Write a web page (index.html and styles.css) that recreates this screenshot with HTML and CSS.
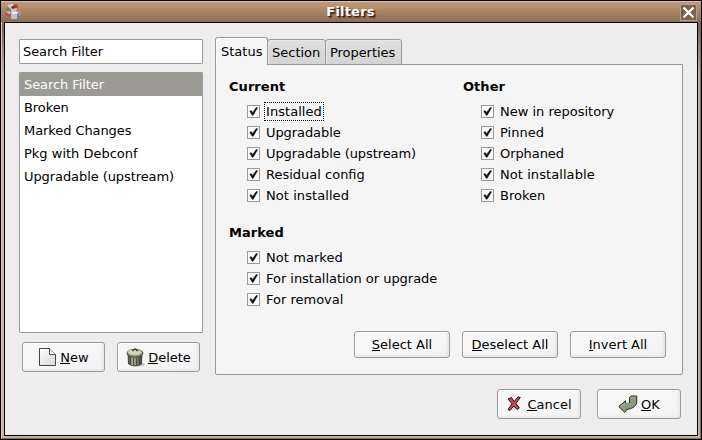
FILE: index.html
```html
<!DOCTYPE html>
<html lang="en">
<head>
<meta charset="utf-8">
<title>Filters</title>
<link rel="stylesheet" href="styles.css">
</head>
<body>
<svg class="defs" width="0" height="0">
  <symbol id="check" viewBox="0 0 11 11">
    <path d="M1.8 5.2 L3.2 4.6 L4.6 6.4 L8.2 1.6 L9.6 1.8 L5.2 9.2 L4.2 9.2Z" fill="#111" stroke="#111" stroke-width=".5"/>
  </symbol>
</svg>
<div class="window">
  <header class="titlebar">
    <svg class="app-icon" width="18" height="18" viewBox="0 0 18 18">
      <path d="M2 6 L8 4 L13 8 L8 11 L2 9Z" fill="#aaa9a2"/>
      <path d="M3 2 L8 1 L12 3 L7 6Z" fill="#d6d2ca"/>
      <path d="M7 4 L12 1 L14 5 L9 7Z" fill="#5a302b"/>
      <path d="M10 2 L13 1 L14 5 L12 6Z" fill="#c34236"/>
      <path d="M2 4 L7 6 L7 11 L2 8Z" fill="#777c7b"/>
      <path d="M7 6 L13 5 L12 10 L7 11Z" fill="#c5c8c7"/>
      <path d="M1 9 L5 8 L8 10 L8 15 L1 12Z" fill="#bb514d"/>
      <path d="M2 9 L5 8 L8 10 L5 11Z" fill="#e6b4ae"/>
      <path d="M12 8 L17 8 L17 12 L13 14Z" fill="#d97f85"/>
      <path d="M7 11 L9 9 H15 L12 12Z" fill="#e9f0f5"/>
      <path d="M7 11 H13 V16 L7 16Z" fill="#a8c3da"/>
      <path d="M13 11 L15 9 V14 L13 16Z" fill="#6488a7"/>
    </svg>
    <h1 class="title">Filters</h1>
    <button class="close" aria-label="Close">
      <svg width="15" height="15" viewBox="0 0 15 15"><path d="M2.5 2.5 L12.5 12.5 M12.5 2.5 L2.5 12.5" stroke="#fff" stroke-width="2.3"/></svg>
    </button>
  </header>
  <main class="content">
    <div class="columns">
      <aside class="sidebar">
        <div class="entry">Search Filter</div>
        <ul class="list">
          <li class="selected">Search Filter</li>
          <li>Broken</li>
          <li>Marked Changes</li>
          <li class="plain">Pkg with Debconf</li>
          <li>Upgradable (upstream)</li>
        </ul>
        <div class="side-buttons">
          <button class="btn tall">
            <svg width="18" height="20" viewBox="0 0 18 20">
              <defs><linearGradient id="paper" x1="0" y1="0" x2="1" y2="1"><stop offset="0" stop-color="#fff"/><stop offset="1" stop-color="#d8d8d6"/></linearGradient></defs>
              <path d="M1.5 1.5 H11.5 L17.5 7.5 V18.5 H1.5Z" fill="url(#paper)" stroke="#444" stroke-linejoin="round"/>
              <path d="M11.5 1.5 V7.5 H17.5" fill="#fff" stroke="#555"/>
            </svg>
            <span><u>N</u>ew</span>
          </button>
          <button class="btn tall delete">
            <svg width="19" height="20" viewBox="0 0 19 20">
              <defs><linearGradient id="can"><stop offset="0" stop-color="#45463a"/><stop offset=".35" stop-color="#b5b6a0"/><stop offset="1" stop-color="#3c3d32"/></linearGradient></defs>
              <ellipse cx="13" cy="17.5" rx="6" ry="2" fill="#c8c8c4"/>
              <path d="M2 7 L2.5 17 Q8.5 21 15.5 17 L16 7Z" fill="url(#can)" stroke="#35362b" stroke-width=".8"/>
              <path d="M4.5 10 V17.5 M7.5 11 V18.5 M10.5 11 V18.5 M13.5 10 V17.5" stroke="#4b4d40"/>
              <ellipse cx="9" cy="6.3" rx="8" ry="4" fill="#85876f" stroke="#383a2f" stroke-width=".8"/>
              <ellipse cx="8.7" cy="5.3" rx="6.8" ry="2.9" fill="#d3d4c0"/>
              <path d="M6.5 4.2 Q9 -.2 11.5 4.2" fill="none" stroke="#34362c" stroke-width="1.3"/>
            </svg>
            <span><u>D</u>elete</span>
          </button>
        </div>
      </aside>
      <section class="notebook">
        <nav class="tabs">
          <div class="tab active">Status</div>
          <div class="tab section-tab">Section</div>
          <div class="tab properties-tab">Properties</div>
        </nav>
        <div class="panel">
          <div class="groups">
            <div class="group">
              <h2>Current</h2>
              <div class="option"><svg class="box"><use href="#check"/></svg><span class="focused">Installed</span></div>
              <div class="option"><svg class="box"><use href="#check"/></svg><span class="snug">Upgradable</span></div>
              <div class="option"><svg class="box"><use href="#check"/></svg><span class="snug">Upgradable (upstream)</span></div>
              <div class="option"><svg class="box"><use href="#check"/></svg>Residual config</div>
              <div class="option"><svg class="box"><use href="#check"/></svg><span class="loose">Not installed</span></div>
            </div>
            <div class="group">
              <h2>Other</h2>
              <div class="option"><svg class="box"><use href="#check"/></svg>New in repository</div>
              <div class="option"><svg class="box"><use href="#check"/></svg>Pinned</div>
              <div class="option"><svg class="box"><use href="#check"/></svg><span class="snug">Orphaned</span></div>
              <div class="option"><svg class="box"><use href="#check"/></svg><span class="loose">Not installable</span></div>
              <div class="option"><svg class="box"><use href="#check"/></svg>Broken</div>
            </div>
            <div class="group">
              <h2>Marked</h2>
              <div class="option"><svg class="box"><use href="#check"/></svg><span class="loose">Not marked</span></div>
              <div class="option"><svg class="box"><use href="#check"/></svg><span class="long">For installation or upgrade</span></div>
              <div class="option"><svg class="box"><use href="#check"/></svg>For removal</div>
            </div>
          </div>
          <div class="panel-buttons">
            <button class="btn"><span><u>S</u>elect All</span></button>
            <button class="btn"><span><u>D</u>eselect All</span></button>
            <button class="btn"><span><u>I</u>nvert All</span></button>
          </div>
        </div>
      </section>
    </div>
    <footer class="actions">
      <button class="btn tall cancel">
        <svg width="14" height="16" viewBox="0 0 14 16">
          <path d="M1 3 L4.5 1.5 L7 5.5 L11 1 L13.3 1.3 L9 7.5 L12.3 12 L10 13.5 L6.7 10 L3 14.5 L1 13.5 L5 7.8Z" fill="#c34a55" stroke="#251014" stroke-linejoin="round"/>
        </svg>
        <span><u>C</u>ancel</span>
      </button>
      <button class="btn tall ok">
        <svg width="20" height="19" viewBox="0 0 20 19">
          <path d="M11.5 2.5 L13 1 H18.7 V8 Q17 13.5 8.5 14.5 V15.5 L6.8 17.4 L.8 11.6 L7.5 5.8 V8.3 H11.5Z" fill="#899a80" stroke="#252c22" stroke-linejoin="round"/>
          <path d="M13 2.4 H17.5 M12.4 8.8 H7 L2.7 11.6" fill="none" stroke="#a9b69f"/>
        </svg>
        <span><u>O</u>K</span>
      </button>
    </footer>
  </main>
</div>
</body>
</html>
```

FILE: styles.css
```css
* { box-sizing: border-box; }
body {
  margin: 0;
  font: 13px/15px "DejaVu Sans", sans-serif;
  color: #000;
  background: #000;
}
.defs { display: none; }
svg { display: block; flex: none; }
button { font: inherit; color: inherit; padding: 0; }
.window {
  width: 702px;
  height: 440px;
  border: 1px solid #000;
  padding: 0 3px 3px;
  background: linear-gradient(#c5a17d, #806247 25px, #cdb095 75px, #cdb095);
  box-shadow: inset 1px 1px #e0c5b0, inset -1px -1px #836a54;
}
.titlebar {
  height: 21px;
  margin: 0 -3px;
  display: flex;
  align-items: center;
  padding: 0 4px 0 3px;
  border-top: 1px solid #e2c0a0;
  background: linear-gradient(#c19b76, #8b6d51);
}
.title {
  flex: 1;
  margin: 0;
  padding-right: 1px;
  text-align: center;
  font-size: 13px;
  line-height: 15px;
  letter-spacing: .2px;
  position: relative;
  top: -1px;
  color: #fff;
  text-shadow: 1px 1px 1px #30251c, 2px 2px 1px #55412f;
}
.close {
  width: 17px;
  height: 17px;
  border: 1px solid #b7a18c;
  background: #79614c;
  display: flex;
  align-items: center;
  justify-content: center;
}
.content {
  height: 414px;
  border: 1px solid #000;
  background: #ededed;
  padding: 14px 14px 0;
}
.columns { display: flex; gap: 12px; height: 338px; }
.sidebar { width: 184px; padding-top: 2px; }
.entry {
  height: 25px;
  padding: 4px 3px;
  border: 1px solid #999994;
  border-radius: 1px;
  background: #fff;
  letter-spacing: -.08px;
}
.list {
  list-style: none;
  height: 261px;
  margin: 8px 0 9px;
  padding: 0;
  border: 1px solid #999994;
  border-radius: 1px;
  background: #fff;
}
.list li { height: 23px; padding: 4px; letter-spacing: -.08px; }
.list .plain { letter-spacing: 0; }
.list .selected { color: #fff; background: #9b9a94; }
.side-buttons { display: flex; gap: 12px; padding: 0 3px; }
.side-buttons .btn { flex: 1; }
.btn {
  height: 27px;
  display: flex;
  align-items: center;
  justify-content: center;
  gap: 4px;
  border: 1px solid #999;
  border-radius: 3px;
  background: linear-gradient(135deg, #f7f7f7 65%, #f1f1f1);
  box-shadow: inset 1px 1px #fff, inset -2px -2px 2px #e8e8e8;
}
.tall { height: 30px; }
.btn u {
  text-decoration: none;
  background: linear-gradient(#000, #000) 0 100% / 100% 1px no-repeat;
  display: inline-block;
  height: 14px;
}
.delete { gap: 3px; }
.notebook { width: 468px; }
.tabs { display: flex; align-items: flex-end; height: 28px; margin-bottom: -1px; position: relative; }
.tab {
  height: 26px;
  padding: 5px 4px 0;
  border: 1px solid #999;
  border-radius: 3px 3px 0 0;
  background: linear-gradient(#e0e0e0, #d4d4d4);
  box-shadow: inset 1px 1px #e9e9e9;
  white-space: nowrap;
}
.tab.active {
  width: 53px;
  height: 28px;
  padding: 6px 5px 0;
  border-bottom: 0;
  background: #f5f5f5;
  box-shadow: inset 1px 1px #fff;
}
.section-tab { width: 59px; margin-left: -1px; }
.properties-tab { width: 77px; margin-left: -1px; letter-spacing: -.05px; }
.panel {
  height: 311px;
  border: 1px solid #999;
  border-radius: 0 0 2px 2px;
  background: #f5f5f5;
  padding: 14px 16px 0 13px;
}
.groups {
  display: grid;
  grid-template-columns: 234px 1fr;
  row-gap: 19px;
  height: 252px;
  align-content: start;
}
.group h2 { margin: 0 0 7px; font-size: 13px; line-height: 15px; letter-spacing: .05px; }
.option { display: flex; align-items: center; gap: 6px; height: 21px; padding-left: 18px; }
.box {
  width: 13px;
  height: 13px;
  border: 1px solid #999;
  background: #fafafa;
}
.snug { letter-spacing: -.08px; }
.loose { letter-spacing: .07px; }
.long { letter-spacing: -.03px; }
.focused { outline: 1px dotted #000; outline-offset: 1px; letter-spacing: .05px; }
.panel-buttons { display: flex; justify-content: flex-end; gap: 12px; }
.panel-buttons .btn { width: 96px; }
.actions { display: flex; justify-content: flex-end; gap: 16px; margin: 14px 2px 0 0; }
.actions .btn { width: 84px; }
.cancel { gap: 6px; padding-left: 1px; }
.ok { gap: 3px; }
```
